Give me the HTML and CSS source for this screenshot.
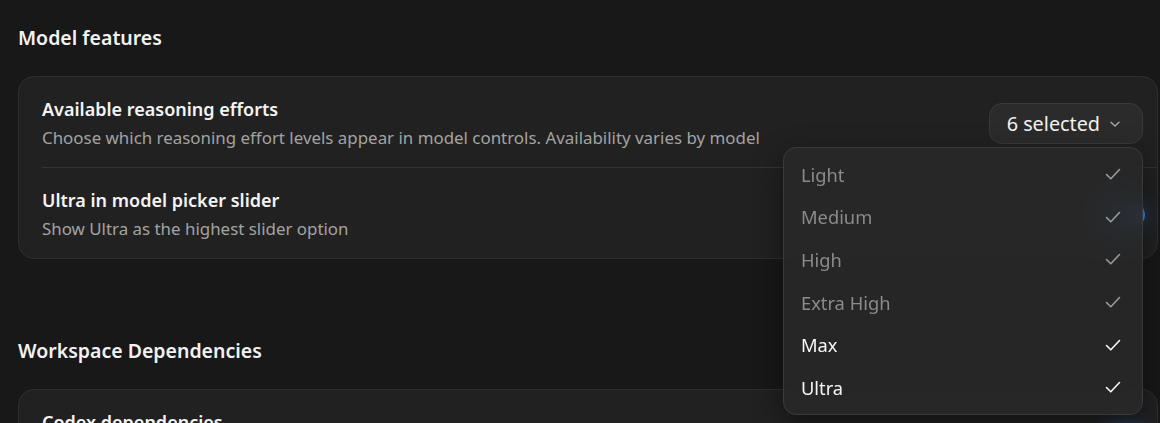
FILE: index.html
```html
<!DOCTYPE html>
<html lang="en">
<head>
  <meta charset="UTF-8" />
  <title>Settings</title>
  <meta name="viewport" content="width=device-width, initial-scale=1.0"/>
  <link rel="stylesheet" href="styles.css">
</head>
<body>
  <main class="settings">
    <section class="group">
      <h2 class="group-title">Model features</h2>
      <div class="card">
        <div class="row">
          <div class="row-text">
            <div class="row-title">Available reasoning efforts</div>
            <div class="row-desc">Choose which reasoning effort levels appear in model controls. Availability varies by model</div>
          </div>
          <div class="select-wrap">
            <button class="select-btn">6 selected
              <svg class="chevron" width="14" height="14" viewBox="0 0 14 14"><path d="M3 5.2 7 9l4-3.8" fill="none" stroke="currentColor" stroke-width="1.4" stroke-linecap="round" stroke-linejoin="round"/></svg>
            </button>
            <ul class="menu">
              <li class="menu-item">Light <span class="check"></span></li>
              <li class="menu-item">Medium <span class="check"></span></li>
              <li class="menu-item">High <span class="check"></span></li>
              <li class="menu-item">Extra High <span class="check"></span></li>
              <li class="menu-item on">Max <span class="check"></span></li>
              <li class="menu-item on">Ultra <span class="check"></span></li>
            </ul>
          </div>
        </div>
        <div class="row">
          <div class="row-text">
            <div class="row-title">Ultra in model picker slider</div>
            <div class="row-desc">Show Ultra as the highest slider option</div>
          </div>
          <span class="toggle"></span>
        </div>
      </div>
    </section>

    <section class="group">
      <h2 class="group-title">Workspace Dependencies</h2>
      <div class="card">
        <div class="row">
          <div class="row-text">
            <div class="row-title">Codex dependencies</div>
            <div class="row-desc">Install and manage dependencies for this workspace</div>
          </div>
          <span class="toggle"></span>
        </div>
      </div>
    </section>
  </main>

  <script>
    document.querySelectorAll('.menu-item .check').forEach(c => {
      c.innerHTML = '<svg width="20" height="20" viewBox="0 0 20 20"><path d="M3.5 10.5l4.3 4.3L16.5 5.5" fill="none" stroke="currentColor" stroke-width="1.6" stroke-linecap="round" stroke-linejoin="round"/></svg>';
    });
  </script>
</body>
</html>
```

FILE: styles.css
```css
body {
  margin: 0;
  background: #181818;
  color: #f2f2f2;
  font-family: 'Noto Sans', 'Open Sans', sans-serif;
  overflow: hidden;
}

.settings {
  padding: 25px 2px 0 18px;
}

.group {
  margin-bottom: 79px;
}

.group-title {
  margin: 0 0 25px;
  font-size: 19.5px;
  line-height: 26px;
  font-weight: 600;
  color: #f2f2f2;
}

.card {
  background: #212121;
  border: 1px solid #2f2f2f;
  border-radius: 16px;
}

.row {
  display: flex;
  align-items: center;
  justify-content: space-between;
  padding: 20px 12px 17px 23px;
  margin: 0;
}

.row + .row {
  border-top: 1px solid #333;
  margin-left: 23px;
  padding-left: 0;
}

.row-title {
  font-size: 18px;
  line-height: 24px;
  font-weight: 600;
  color: #f4f4f4;
}

.row-desc {
  margin-top: 5px;
  font-size: 16.9px;
  line-height: 24px;
  color: #a3a3a3;
}

.select-wrap {
  position: relative;
  margin-right: 2px;
}

.select-btn {
  display: flex;
  align-items: center;
  gap: 8px;
  height: 41px;
  padding: 0 20px 0 17px;
  background: #2b2b2b;
  border: 1px solid #3a3a3a;
  border-radius: 13px;
  color: #f2f2f2;
  font-family: inherit;
  font-size: 19.8px;
  cursor: pointer;
}

.chevron {
  color: #a8a8a8;
}

.menu {
  position: absolute;
  top: 44px;
  right: 0;
  z-index: 5;
  width: 358px;
  margin: 0;
  padding: 5px 0;
  list-style: none;
  background: rgba(40, 40, 40, 0.9);
  backdrop-filter: blur(18px);
  border: 1px solid #3a3a3a;
  border-radius: 13px;
  box-shadow: 0 10px 30px rgba(0, 0, 0, 0.45);
}

.menu-item {
  display: flex;
  align-items: center;
  justify-content: space-between;
  height: 42.6px;
  padding: 0 19px 0 17px;
  font-size: 18.3px;
  color: #8b8b8b;
}

.menu-item .check {
  display: flex;
  color: #9a9a9a;
}

.menu-item.on,
.menu-item.on .check {
  color: #f6f6f6;
}

.toggle {
  flex: none;
  width: 42px;
  height: 24px;
  border-radius: 12px;
  background: #2f86e6;
  box-shadow: 0 0 18px rgba(47, 134, 230, 0.45);
}
```
